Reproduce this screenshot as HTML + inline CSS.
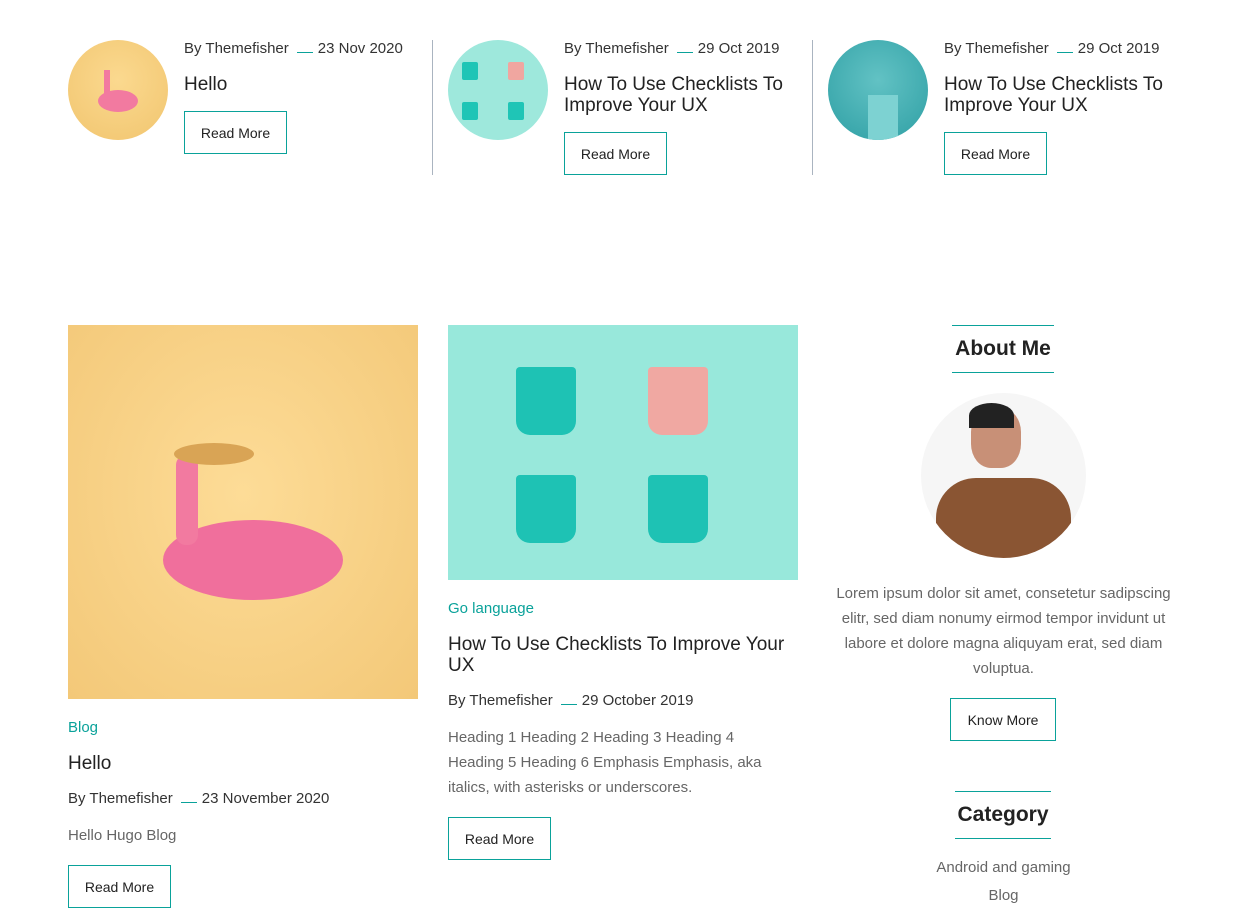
<!DOCTYPE html>
<html><head><meta charset="utf-8"><style>
*{margin:0;padding:0;box-sizing:border-box}
body{width:1233px;height:913px;overflow:hidden;background:#fff;font-family:"Liberation Sans",sans-serif;color:#222;position:relative}
.a{position:absolute}
.meta{font-size:15px;color:#333;white-space:nowrap}
.meta i{display:inline-block;width:16px;border-bottom:1px solid #0aa29a;margin:0 5px 0 8px;height:12px;vertical-align:baseline}
.t{font-size:19px;color:#222;line-height:21px}
.btn{border:1px solid #0aa29a;font-size:14px;color:#222;display:flex;align-items:center;justify-content:center;height:43px}
.cat{font-size:15px;color:#0aa29a}
.p{font-size:15px;color:#666;line-height:25px}
.circ{border-radius:50%;overflow:hidden}
.vl{width:1px;background:#aab4c0}
</style></head><body>
<!-- top row -->
<div class="a circ" style="left:68px;top:40px;width:100px;height:100px;background:radial-gradient(circle at 50% 40%,#fbd98f,#f1c56f)"><div class="a" style="left:30px;top:50px;width:40px;height:22px;border-radius:50%;background:#f27aa0"></div><div class="a" style="left:36px;top:30px;width:6px;height:26px;background:#f27aa0"></div></div>
<div class="a meta" style="left:184px;top:40px">By Themefisher<i></i>23 Nov 2020</div>
<div class="a t" style="left:184px;top:74px">Hello</div>
<div class="a btn" style="left:184px;top:111px;width:103px">Read More</div>
<div class="a vl" style="left:432px;top:40px;height:135px"></div>
<div class="a circ" style="left:448px;top:40px;width:100px;height:100px;background:#9ee8dc"><div class="a" style="left:14px;top:22px;width:16px;height:18px;background:#1fc5b6;border-radius:2px"></div><div class="a" style="left:60px;top:22px;width:16px;height:18px;background:#f0a6a0;border-radius:2px"></div><div class="a" style="left:14px;top:62px;width:16px;height:18px;background:#1fc5b6;border-radius:2px"></div><div class="a" style="left:60px;top:62px;width:16px;height:18px;background:#1fc5b6;border-radius:2px"></div></div>
<div class="a meta" style="left:564px;top:40px">By Themefisher<i></i>29 Oct 2019</div>
<div class="a t" style="left:564px;top:74px">How To Use Checklists To<br>Improve Your UX</div>
<div class="a btn" style="left:564px;top:132px;width:103px">Read More</div>
<div class="a vl" style="left:812px;top:40px;height:135px"></div>
<div class="a circ" style="left:828px;top:40px;width:100px;height:100px;background:radial-gradient(circle at 50% 40%,#62c2c4,#2e9fa4)"><div class="a" style="left:40px;top:55px;width:30px;height:45px;background:#7dd2d2"></div></div>
<div class="a meta" style="left:944px;top:40px">By Themefisher<i></i>29 Oct 2019</div>
<div class="a t" style="left:944px;top:74px">How To Use Checklists To<br>Improve Your UX</div>
<div class="a btn" style="left:944px;top:132px;width:103px">Read More</div>

<!-- post 1 -->
<div class="a" style="left:68px;top:325px;width:350px;height:374px;background:radial-gradient(ellipse at 50% 45%,#fddc97,#f3c878)">
<div class="a" style="left:95px;top:195px;width:180px;height:80px;border-radius:50%;background:#f06f9c"></div>
<div class="a" style="left:108px;top:130px;width:22px;height:90px;border-radius:10px;background:#f27aa0"></div>
<div class="a" style="left:106px;top:118px;width:80px;height:22px;border-radius:50%;background:#d9a455"></div>
</div>
<div class="a cat" style="left:68px;top:719px">Blog</div>
<div class="a t" style="left:68px;top:753px">Hello</div>
<div class="a meta" style="left:68px;top:790px">By Themefisher<i></i>23 November 2020</div>
<div class="a p" style="left:68px;top:823px">Hello Hugo Blog</div>
<div class="a btn" style="left:68px;top:865px;width:103px">Read More</div>

<!-- post 2 -->
<div class="a" style="left:448px;top:325px;width:350px;height:255px;background:#98e8db">
<div class="a" style="left:68px;top:42px;width:60px;height:68px;background:#1ec2b4;border-radius:4px 4px 14px 14px"></div>
<div class="a" style="left:200px;top:42px;width:60px;height:68px;background:#f0a8a2;border-radius:4px 4px 14px 14px"></div>
<div class="a" style="left:68px;top:150px;width:60px;height:68px;background:#1ec2b4;border-radius:4px 4px 14px 14px"></div>
<div class="a" style="left:200px;top:150px;width:60px;height:68px;background:#1ec2b4;border-radius:4px 4px 14px 14px"></div>
</div>
<div class="a cat" style="left:448px;top:600px">Go language</div>
<div class="a t" style="left:448px;top:634px">How To Use Checklists To Improve Your<br>UX</div>
<div class="a meta" style="left:448px;top:692px">By Themefisher<i></i>29 October 2019</div>
<div class="a p" style="left:448px;top:725px;width:345px">Heading 1 Heading 2 Heading 3 Heading 4 Heading 5 Heading 6 Emphasis Emphasis, aka italics, with asterisks or underscores.</div>
<div class="a btn" style="left:448px;top:817px;width:103px">Read More</div>

<!-- sidebar -->
<div class="a" style="left:952px;top:325px;width:102px;height:48px;border-top:1px solid #0aa29a;border-bottom:1px solid #0aa29a;font-size:21px;font-weight:bold;text-align:center;line-height:46px">About Me</div>
<div class="a circ" style="left:921px;top:393px;width:165px;height:165px;background:#f6f6f6">
<div class="a" style="left:15px;top:85px;width:135px;height:100px;border-radius:40px 40px 0 0;background:#8a5533"></div>
<div class="a" style="left:50px;top:15px;width:50px;height:60px;border-radius:40%;background:#c89077"></div>
<div class="a" style="left:48px;top:10px;width:45px;height:25px;border-radius:50% 50% 0 0;background:#222"></div>
</div>
<div class="a p" style="left:826px;top:581px;width:355px;text-align:center">Lorem ipsum dolor sit amet, consetetur sadipscing elitr, sed diam nonumy eirmod tempor invidunt ut labore et dolore magna aliquyam erat, sed diam voluptua.</div>
<div class="a btn" style="left:950px;top:698px;width:106px">Know More</div>
<div class="a" style="left:955px;top:791px;width:96px;height:48px;border-top:1px solid #0aa29a;border-bottom:1px solid #0aa29a;font-size:21px;font-weight:bold;text-align:center;line-height:46px">Category</div>
<div class="a p" style="left:826px;top:855px;width:355px;text-align:center">Android and gaming</div>
<div class="a p" style="left:826px;top:883px;width:355px;text-align:center">Blog</div>
</body></html>
